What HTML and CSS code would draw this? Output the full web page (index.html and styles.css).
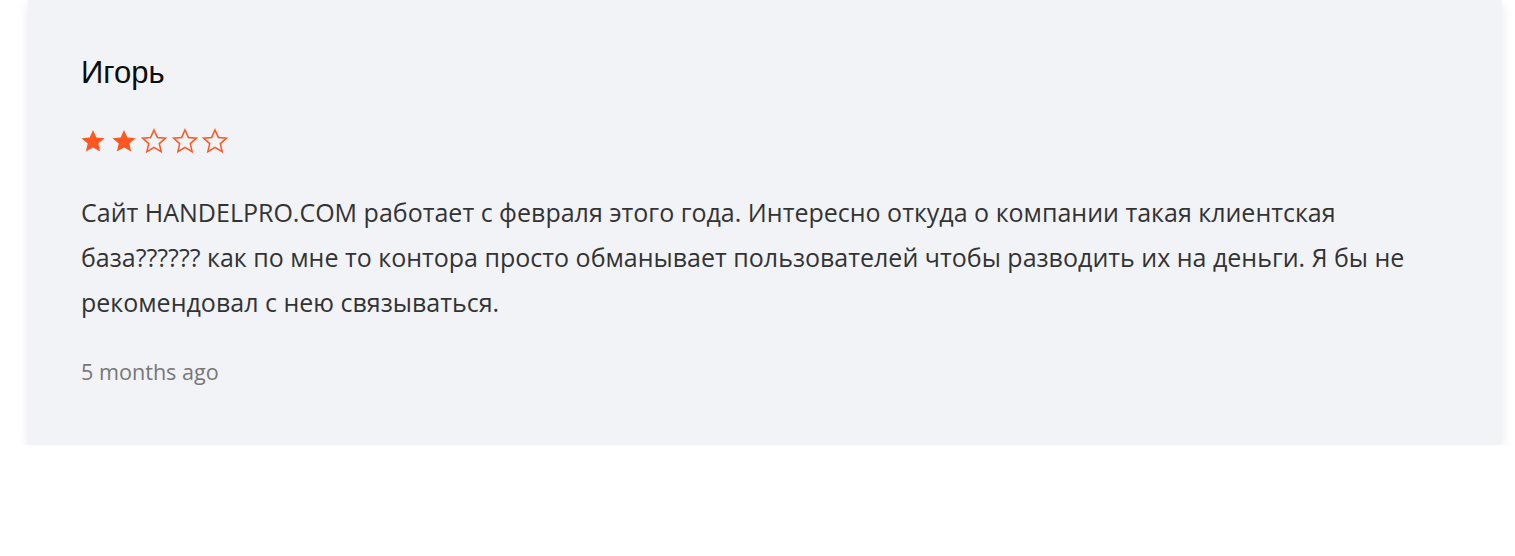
FILE: index.html
```html
<!DOCTYPE html>
<html lang="ru">
<head>
<meta charset="utf-8">
<title>Review</title>
<link rel="stylesheet" href="styles.css">
</head>
<body>
<div class="page">
  <article class="review">
    <h3 class="review-name">Игорь</h3>
    <div class="stars">
      <svg class="star" viewBox="0 0 24 24"><path class="filled" d="M12 1.8l3.1 6.9 7.5.7-5.7 5 1.7 7.4L12 17.9l-6.6 3.9 1.7-7.4-5.7-5 7.5-.7z"/></svg>
      <svg class="star" viewBox="0 0 24 24"><path class="filled" d="M12 1.8l3.1 6.9 7.5.7-5.7 5 1.7 7.4L12 17.9l-6.6 3.9 1.7-7.4-5.7-5 7.5-.7z"/></svg>
      <svg class="star" viewBox="0 0 24 24"><path class="empty" d="M12 1.8l3.1 6.9 7.5.7-5.7 5 1.7 7.4L12 17.9l-6.6 3.9 1.7-7.4-5.7-5 7.5-.7z"/></svg>
      <svg class="star" viewBox="0 0 24 24"><path class="empty" d="M12 1.8l3.1 6.9 7.5.7-5.7 5 1.7 7.4L12 17.9l-6.6 3.9 1.7-7.4-5.7-5 7.5-.7z"/></svg>
      <svg class="star" viewBox="0 0 24 24"><path class="empty" d="M12 1.8l3.1 6.9 7.5.7-5.7 5 1.7 7.4L12 17.9l-6.6 3.9 1.7-7.4-5.7-5 7.5-.7z"/></svg>
    </div>
    <p class="review-text">Сайт HANDELPRO.COM работает с февраля этого года. Интересно откуда о компании такая клиентская база?????? как по мне то контора просто обманывает пользователей чтобы разводить их на деньги. Я бы не рекомендовал с нею связываться.</p>
    <div class="review-date">5 months ago</div>
  </article>
</div>
</body>
</html>
```

FILE: styles.css
```css
html, body {
  margin: 0;
  padding: 0;
  background: #ffffff;
}

.page {
  padding: 0 13px 0 28px;
}

.review {
  background: #f2f3f7;
  border-radius: 0 0 4px 4px;
  box-shadow: 0 4px 12px rgba(0, 0, 0, 0.09);
  padding: 53px 70px 58px 53px;
}

.review-name {
  margin: 0;
  font-family: "Liberation Sans", Arial, sans-serif;
  font-weight: 400;
  font-size: 31px;
  line-height: 40px;
  color: #0d0d0d;
}

.stars {
  display: flex;
  gap: 4.5px;
  margin-top: 35px;
  margin-left: -1px;
}

.star {
  width: 26px;
  height: 26px;
  display: block;
}

.star .filled {
  fill: #ff5722;
}

.star .empty {
  fill: none;
  stroke: #ff5722;
  stroke-width: 1.4;
  stroke-linejoin: miter;
}

.review-text {
  margin: 36px 0 0;
  font-family: "Open Sans", sans-serif;
  font-size: 25px;
  line-height: 45px;
  color: #333;
}

.review-date {
  margin-top: 32px;
  font-family: "Open Sans", sans-serif;
  font-size: 21.6px;
  line-height: 30px;
  color: #777;
}
```
